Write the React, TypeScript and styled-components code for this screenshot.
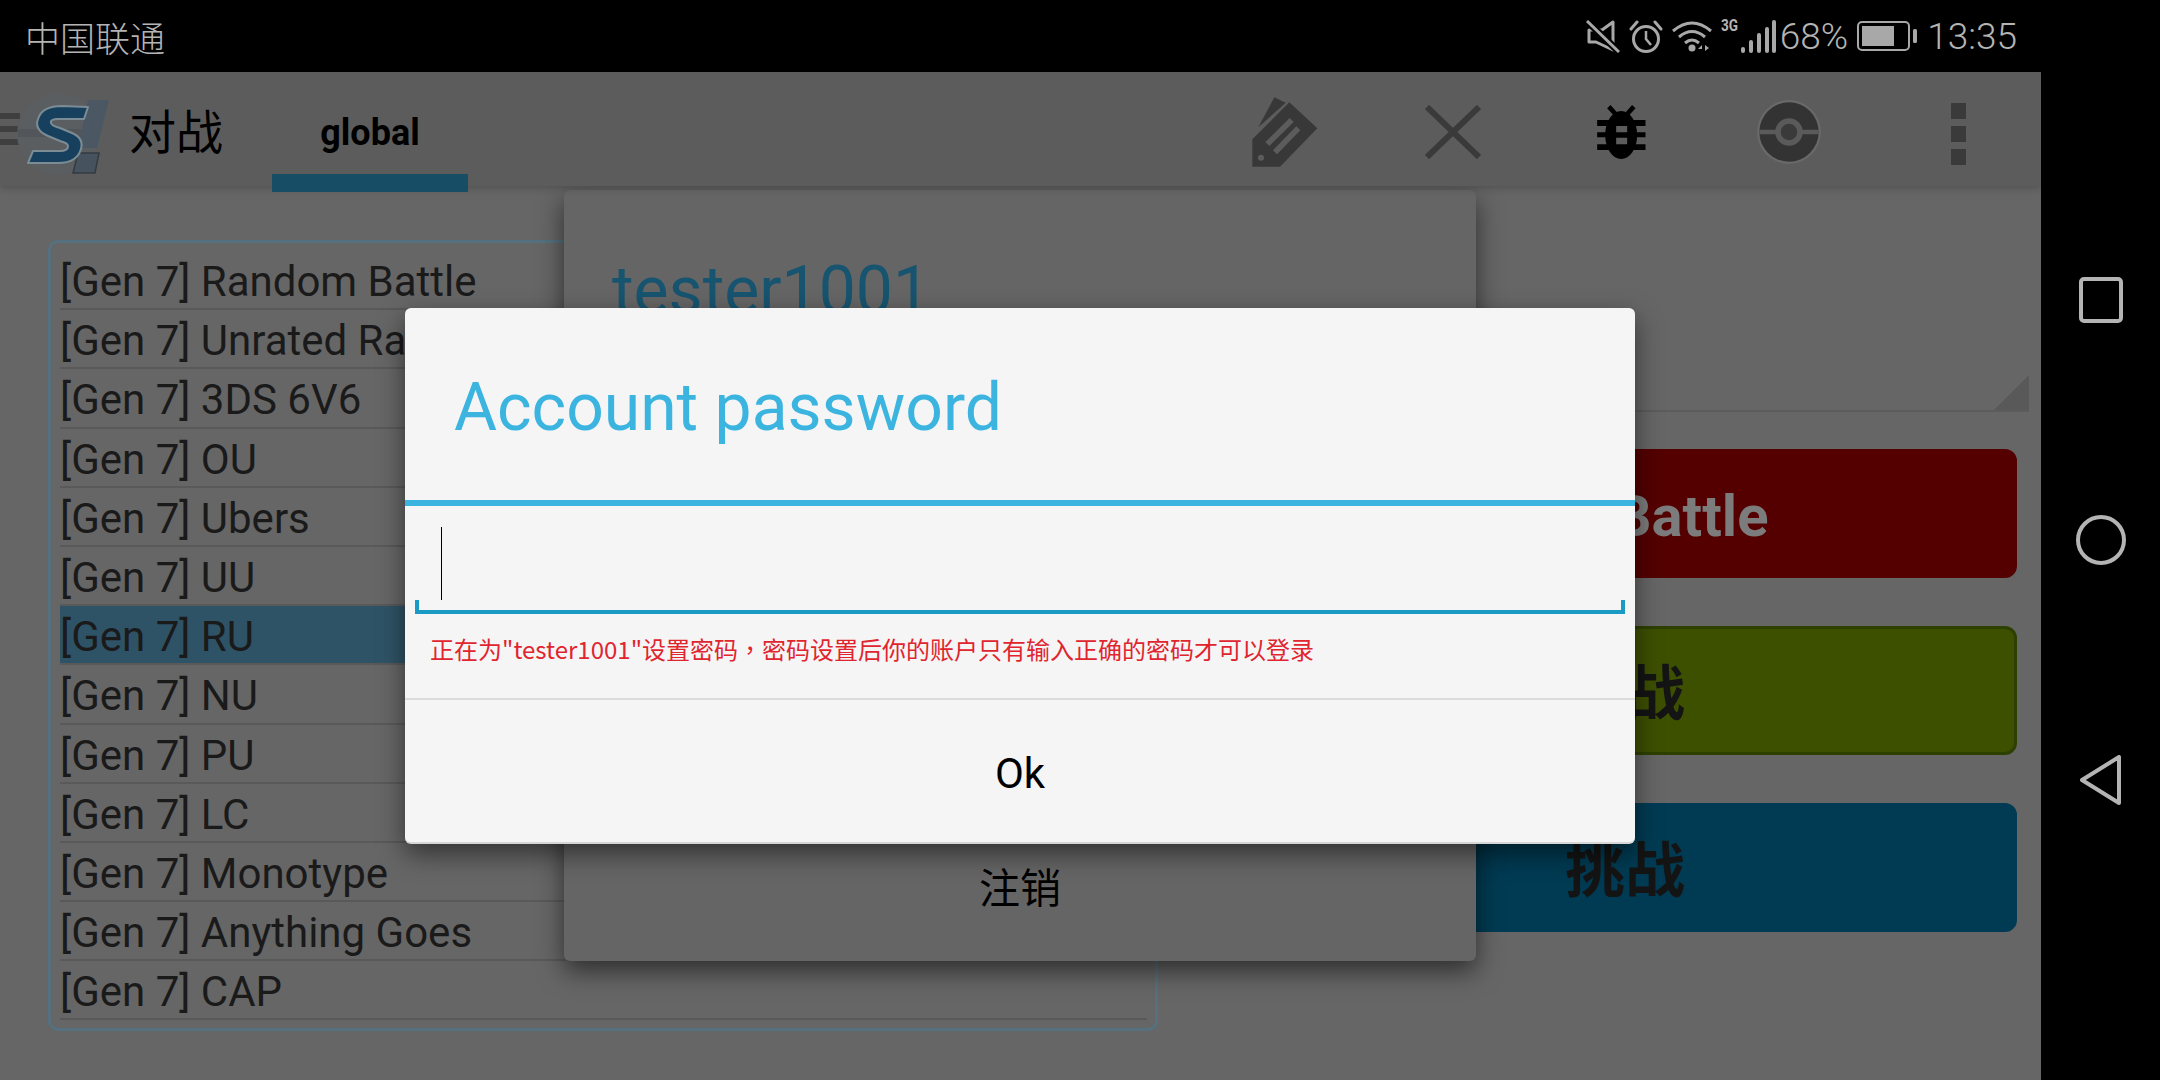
import styled, { createGlobalStyle } from "styled-components"

const FONT = `Roboto, "Noto Sans CJK SC", sans-serif`

const GlobalStyle = createGlobalStyle`
    html, body {
        margin: 0;
        padding: 0;
        background: #000;
    }
    * {
        box-sizing: border-box;
    }
`

const Frame = styled.div`
    position: relative;
    width: 2160px;
    height: 1080px;
    overflow: hidden;
    display: flex;
    flex-direction: column;
    font-family: ${FONT};
    background: #000;
`

const StatusBar = styled.div`
    height: 72px;
    flex: none;
    display: flex;
    align-items: center;
    padding: 0 143px 0 25px;
    color: #b4b4b4;
`

const Carrier = styled.span`
    font-size: 35px;
    font-weight: 300;
    margin-right: auto;
`

const StatusIcons = styled.div`
    display: flex;
    align-items: center;
    height: 72px;

    svg {
        flex: none;
        display: block;
    }
`

const StatusGap = styled.span`
    width: 9px;
    flex: none;
`

const StatusText = styled.span<{ $left: number }>`
    font-size: 37px;
    font-weight: 300;
    line-height: 72px;
    padding-top: 2px;
    margin-left: ${(p) => p.$left}px;
`

const NetType = styled.span`
    width: 20px;
    margin: -20px 0 0 9px;
    font-size: 16px;
    font-weight: 700;
    line-height: 16px;
    transform: scaleX(0.85);
    transform-origin: left;
`

const BatteryWrap = styled.span`
    margin-left: 9px;
`

const Main = styled.div`
    flex: 1;
    display: flex;
    min-height: 0;
`

const Screen = styled.div`
    width: 2041px;
    display: flex;
    flex-direction: column;
    background: #666;
`

const Header = styled.header`
    height: 114px;
    flex: none;
    display: flex;
    align-items: center;
    background: #5c5c5c;
    box-shadow: 0 2px 8px rgba(0, 0, 0, 0.22);
    position: relative;
    z-index: 1;
`

const Hamburger = styled.div`
    width: 20px;
    flex: none;
    display: flex;
    flex-direction: column;
    gap: 7px;

    i {
        display: block;
        height: 6px;
        background: #3f3f3f;
    }
`

const Logo = styled.svg`
    display: block;
    flex: none;
    width: 130px;
    height: 100px;
    margin: 14px -30px 0 -20px;
`

const ScreenTitle = styled.h1`
    margin: 8px 0 0 29px;
    width: 143px;
    flex: none;
    font-size: 47px;
    font-weight: 400;
    color: #000;
    line-height: 60px;
`

const Tab = styled.div`
    position: relative;
    width: 196px;
    flex: none;
    align-self: stretch;
    display: flex;
    align-items: center;
    justify-content: center;
    font-size: 36px;
    font-weight: 700;
    color: #000;
    padding-top: 8px;

    &::after {
        content: "";
        position: absolute;
        left: 0;
        right: 0;
        bottom: -6px;
        height: 18px;
        background: #174e66;
    }
`

const HeaderIcons = styled.div`
    margin-left: auto;
    display: flex;
`

const HeaderIcon = styled.div`
    width: 168px;
    height: 114px;
    padding-top: 6px;
    display: flex;
    align-items: center;
    justify-content: center;

    svg {
        display: block;
    }
`

const Dots = styled.div`
    display: flex;
    flex-direction: column;
    gap: 7px;
    margin: 4px 0 0 2px;

    i {
        display: block;
        width: 15px;
        height: 16px;
        background: #3a3a3a;
    }
`

const Content = styled.div`
    flex: 1;
    display: flex;
    align-items: flex-start;
`

const FormatList = styled.ul`
    list-style: none;
    width: 1110px;
    height: 791px;
    margin: 54px 0 0 48px;
    padding: 8px 8px 0 9px;
    border: 3px solid #55717f;
    border-radius: 10px;
    font-size: 42px;
    color: #1a1a1a;
`

const FormatRow = styled.li<{ $active?: boolean }>`
    height: 59.2px;
    line-height: 58px;
    padding: 2px 0 0 0;
    white-space: nowrap;
    border-bottom: 2px solid #595959;
    background: ${(p) => (p.$active ? "#2f5366" : "transparent")};
`

const SidePanel = styled.div`
    width: 808px;
    margin: 0 12px 0 auto;
`

const NoteBox = styled.div`
    position: relative;
    height: 226px;
    border-bottom: 2px solid #5c5c5c;

    &::after {
        content: "";
        position: absolute;
        right: 0;
        bottom: 0;
        border-style: solid;
        border-width: 0 0 35px 35px;
        border-color: transparent transparent #595959 transparent;
    }
`

const ActionStack = styled.div`
    display: flex;
    flex-direction: column;
    gap: 48px;
    padding: 37px 12px 0 12px;
`

const ActionButton = styled.div<{ $bg: string; $edge: string; $ink: string; $shift?: number }>`
    height: 129px;
    display: flex;
    align-items: center;
    justify-content: center;
    padding: ${(p) => (p.$shift ? `4px 0 0 ${p.$shift}px` : "0 0 5px 0")};
    background: ${(p) => p.$bg};
    border: 3px solid ${(p) => p.$edge};
    border-radius: 12px;
    color: ${(p) => p.$ink};
    font-size: ${(p) => (p.$shift ? 58 : 60)}px;
    font-weight: 700;
`

const NavBar = styled.nav`
    width: 119px;
    display: flex;
    flex-direction: column;
    align-items: center;
    gap: 190px;
    padding: 203px 0 0 1px;
    background: #000;

    svg {
        display: block;
    }
`

const UserDialog = styled.div`
    position: absolute;
    left: 564px;
    top: 190px;
    width: 912px;
    height: 771px;
    display: flex;
    flex-direction: column;
    background: #656565;
    border-radius: 6px;
    box-shadow: 0 10px 26px rgba(0, 0, 0, 0.55);
`

const UserName = styled.div`
    padding: 61px 0 0 48px;
    font-size: 66px;
    line-height: 80px;
    color: #17546f;
`

const LogoutButton = styled.div`
    margin-top: auto;
    height: 96px;
    text-align: center;
    font-size: 41px;
    line-height: 48px;
    color: #000;
`

const PasswordDialog = styled.div`
    position: absolute;
    left: 405px;
    top: 308px;
    width: 1230px;
    height: 536px;
    display: flex;
    flex-direction: column;
    background: #f5f5f5;
    border-radius: 6px;
    border-bottom: 2px solid #d6d6d6;
    box-shadow: 0 10px 26px rgba(0, 0, 0, 0.5);
`

const DialogTitle = styled.div`
    height: 198px;
    flex: none;
    padding: 60px 0 0 49px;
    font-size: 66px;
    line-height: 80px;
    color: #3bb4e0;
    border-bottom: 6px solid #3bb4e0;
`

const InputField = styled.div`
    height: 108px;
    flex: none;
    margin: 0 10px;
    padding: 21px 0 0 26px;
    position: relative;
    border-bottom: 4px solid #1a9bc4;

    &::before,
    &::after {
        content: "";
        position: absolute;
        bottom: 0;
        width: 4px;
        height: 10px;
        background: #1a9bc4;
    }

    &::before {
        left: 0;
    }

    &::after {
        right: 0;
    }
`

const Caret = styled.div`
    width: 1px;
    height: 73px;
    background: #000;
`

const HintText = styled.div`
    height: 86px;
    flex: none;
    padding: 19px 0 0 25px;
    font-size: 24px;
    line-height: 32px;
    color: #e0252f;
    font-family: "Noto Sans CJK SC", sans-serif;
    border-bottom: 2px solid #dcdcdc;
`

const CenteredComma = styled.span`
    font-family: "Noto Sans CJK TC", sans-serif;
`

const OkButton = styled.div`
    flex: 1;
    display: flex;
    align-items: center;
    justify-content: center;
    font-size: 42px;
    color: #000;
    padding-top: 4px;
`

const formats = [
    "Random Battle",
    "Unrated Random Battle",
    "3DS 6V6",
    "OU",
    "Ubers",
    "UU",
    "RU",
    "NU",
    "PU",
    "LC",
    "Monotype",
    "Anything Goes",
    "CAP",
]

const MuteIcon = () => (
    <svg width="34" height="33" viewBox="0 0 34 33" fill="none" stroke="#a8a8a8" strokeWidth="3">
        <path d="M27 2 L16 10 H3 V22 H10 L27 30 Z" strokeLinejoin="round" fill="none" />
        <path d="M1 1 L33 32" stroke="#000" strokeWidth="7" />
        <path d="M1 1 L33 32" />
    </svg>
)

const AlarmIcon = () => (
    <svg width="34" height="33" viewBox="0 0 34 33" fill="none" stroke="#a8a8a8" strokeWidth="3">
        <circle cx="17" cy="19" r="12.5" />
        <path d="M17 11 V19 L22 25" strokeWidth="2.5" />
        <path d="M2 9 L8 2 M32 9 L26 2" strokeLinecap="round" />
    </svg>
)

const WifiIcon = () => (
    <svg width="40" height="32" viewBox="0 0 40 32" fill="none" stroke="#a8a8a8" strokeWidth="3">
        <path d="M1 11 Q20 -5 39 11" />
        <path d="M7 17 Q20 6 33 17" />
        <path d="M13 23 Q20 17 27 23" />
        <circle cx="20" cy="28" r="3.5" fill="#a8a8a8" stroke="none" />
        <path d="M30 25 L26 29 H30 Z M33 25 L37 28 L33 31 Z" fill="#a8a8a8" stroke="none" />
    </svg>
)

const SignalIcon = () => (
    <svg width="35" height="33" viewBox="0 0 35 33" fill="#a8a8a8">
        <rect x="0" y="27" width="4" height="6" rx="2" />
        <rect x="8" y="20" width="4" height="13" rx="2" />
        <rect x="16" y="13" width="4" height="20" rx="2" />
        <rect x="24" y="7" width="4" height="26" rx="2" />
        <rect x="31" y="0" width="4" height="33" rx="2" />
    </svg>
)

const BatteryIcon = () => (
    <svg width="60" height="30" viewBox="0 0 60 30">
        <rect x="1" y="1" width="51" height="28" rx="4" fill="none" stroke="#a8a8a8" strokeWidth="2" />
        <rect x="5" y="5" width="32" height="20" fill="#a8a8a8" />
        <rect x="56" y="8" width="4" height="14" rx="1.5" fill="#a8a8a8" />
    </svg>
)

const ShowdownLogo = () => (
    <Logo viewBox="0 0 130 100">
        <circle cx="58" cy="48" r="41" fill="#5a5e60" />
        <path d="M18 47 H98" stroke="#52565a" strokeWidth="8" />
        <path d="M88 14 L109 14 L97 62 L78 62 Z" fill="#4b5864" />
        <path d="M78 67 L99 67 L95 87 L73 87 Z" fill="#46525e" stroke="#333b42" strokeWidth="1.5" />
        <path
            d="M88 21 L84 33 L58 33 Q50 33 51 37 Q52 40 60 42 L72 47 Q84 52 81 63 Q77 77 58 77 L28 77 L33 65 L60 65 Q68 65 68 60 Q68 57 60 55 L48 50 Q34 44 38 33 Q42 20 62 20 Z"
            fill="#17405e"
            stroke="#7c8c95"
            strokeWidth="2"
            strokeLinejoin="round"
        />
    </Logo>
)

const TagIcon = () => (
    <svg width="70" height="74" viewBox="30 15 210 222">
        <path d="M148 37 L232 115 L120 230 L37 230 L37 148 Z" fill="#383838" />
        <path d="M103 22 L137 38 L55 112 Z" fill="#383838" />
        <path d="M155 90 L82 162 M175 115 L105 187" stroke="#5c5c5c" strokeWidth="17" />
        <circle cx="63" cy="203" r="9" fill="#5c5c5c" />
    </svg>
)

const CloseIcon = () => (
    <svg width="56" height="54" viewBox="0 0 56 54" stroke="#3a3a3a" strokeWidth="6">
        <path d="M2 2 L54 52 M54 2 L2 52" />
    </svg>
)

const BugIcon = () => (
    <svg width="49" height="55" viewBox="50 45 146 165">
        <path d="M85 50 L105 72 M160 50 L140 72" stroke="#000" strokeWidth="14" />
        <ellipse cx="122" cy="135" rx="48" ry="72" fill="#000" />
        <path d="M50 90 H195 V108 H50 Z M50 127 H195 V142 H50 Z M50 163 H195 V180 H50 Z" fill="#000" />
        <path d="M107 108 H140 V127 H107 Z M107 143 H140 V163 H107 Z" fill="#5c5c5c" />
    </svg>
)

const BallIcon = () => (
    <svg width="66" height="66" viewBox="0 0 60 60">
        <circle cx="30" cy="30" r="29" fill="#696969" />
        <circle cx="30" cy="30" r="27" fill="#333" />
        <path d="M3 30 H57" stroke="#5a5a5a" strokeWidth="4" />
        <circle cx="30" cy="30" r="10" fill="#3a3a3a" stroke="#5a5a5a" strokeWidth="5" />
    </svg>
)

const NavSquare = () => (
    <svg width="44" height="50" viewBox="0 0 44 50" fill="none" stroke="#b4b4b4" strokeWidth="4">
        <rect x="2" y="4" width="40" height="42" rx="3" />
    </svg>
)

const NavCircle = () => (
    <svg width="52" height="50" viewBox="0 0 52 50" fill="none" stroke="#b4b4b4" strokeWidth="4">
        <circle cx="26" cy="25" r="23" />
    </svg>
)

const NavBack = () => (
    <svg width="44" height="50" viewBox="0 0 44 50" fill="none" stroke="#b4b4b4" strokeWidth="4" strokeLinejoin="round">
        <path d="M40 2 V48 L3 25 Z" />
    </svg>
)

export default function App() {
    return (
        <Frame>
            <GlobalStyle />
            <StatusBar>
                <Carrier>中国联通</Carrier>
                <StatusIcons>
                    <MuteIcon />
                    <StatusGap />
                    <AlarmIcon />
                    <StatusGap />
                    <WifiIcon />
                    <NetType>3G</NetType>
                    <SignalIcon />
                    <StatusText $left={4}>68%</StatusText>
                    <BatteryWrap>
                        <BatteryIcon />
                    </BatteryWrap>
                    <StatusText $left={10}>13:35</StatusText>
                </StatusIcons>
            </StatusBar>

            <Main>
                <Screen>
                    <Header>
                        <Hamburger>
                            <i />
                            <i />
                            <i />
                        </Hamburger>
                        <ShowdownLogo />
                        <ScreenTitle>对战</ScreenTitle>
                        <Tab>global</Tab>
                        <HeaderIcons>
                            <HeaderIcon><TagIcon /></HeaderIcon>
                            <HeaderIcon><CloseIcon /></HeaderIcon>
                            <HeaderIcon><BugIcon /></HeaderIcon>
                            <HeaderIcon><BallIcon /></HeaderIcon>
                            <HeaderIcon>
                                <Dots>
                                    <i />
                                    <i />
                                    <i />
                                </Dots>
                            </HeaderIcon>
                        </HeaderIcons>
                    </Header>

                    <Content>
                        <FormatList>
                            {formats.map((name) => (
                                <FormatRow key={name} $active={name === "RU"}>
                                    [Gen 7] {name}
                                </FormatRow>
                            ))}
                        </FormatList>

                        <SidePanel>
                            <NoteBox />
                            <ActionStack>
                                <ActionButton $bg="#540000" $edge="#540000" $ink="#7c7c7c" $shift={133}>
                                    Battle
                                </ActionButton>
                                <ActionButton $bg="#3d5000" $edge="#2e4000" $ink="#141414">
                                    挑战
                                </ActionButton>
                                <ActionButton $bg="#003b53" $edge="#003b53" $ink="#141414">
                                    挑战
                                </ActionButton>
                            </ActionStack>
                        </SidePanel>
                    </Content>
                </Screen>

                <NavBar>
                    <NavSquare />
                    <NavCircle />
                    <NavBack />
                </NavBar>
            </Main>

            <UserDialog>
                <UserName>tester1001</UserName>
                <LogoutButton>注销</LogoutButton>
            </UserDialog>

            <PasswordDialog>
                <DialogTitle>Account password</DialogTitle>
                <InputField>
                    <Caret />
                </InputField>
                <HintText>
                    正在为"tester1001"设置密码<CenteredComma>，</CenteredComma>密码设置后你的账户只有输入正确的密码才可以登录
                </HintText>
                <OkButton>Ok</OkButton>
            </PasswordDialog>
        </Frame>
    )
}
